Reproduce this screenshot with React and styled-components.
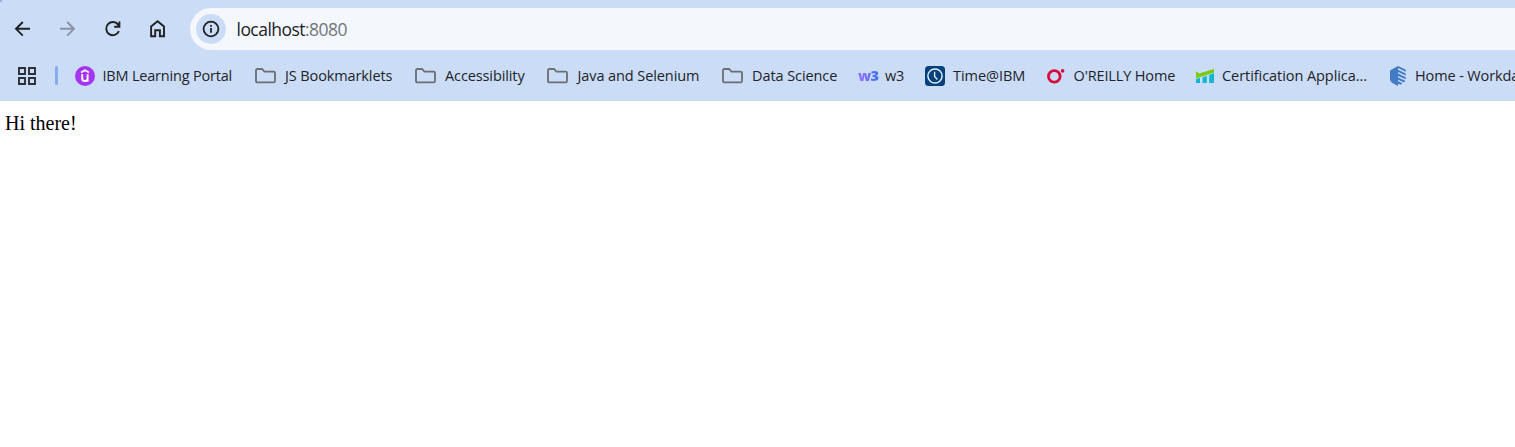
import React from 'react';
import styled, { createGlobalStyle } from 'styled-components';

const GlobalStyle = createGlobalStyle`
  * { box-sizing: border-box; }
  body { margin: 0; background: #fff; overflow: hidden; }
  svg { display: block; flex: none; }
`;

const Browser = styled.div`
  width: 100%;
  height: 447px;
  overflow: hidden;
  font-family: "Open Sans", "Noto Sans", sans-serif;
  color: #202329;
`;

const Chrome = styled.header`
  height: 101px;
  padding-top: 8px;
  background: radial-gradient(circle at 0 0, #7facf0 0, #7facf0 1px, transparent 3px), #cbdcf6;
`;

const Toolbar = styled.div`
  display: flex;
  height: 42px;
`;

const Navigation = styled.nav`
  display: flex;
  align-items: center;
  gap: 21px;
  width: 190px;
  flex: none;
  padding-left: 11px;
`;

const NavButton = styled.button`
  width: 24px;
  height: 24px;
  padding: 0;
  border: 0;
  background: none;
  color: ${({ $dim }) => ($dim ? '#8993a6' : '#202124')};
`;

const AddressBar = styled.div`
  display: flex;
  align-items: center;
  flex: 1;
  padding-left: 6px;
  gap: 10.5px;
  background: #f4f7fc;
  border-radius: 21px 0 0 21px;
`;

const SiteInfo = styled.span`
  display: grid;
  place-items: center;
  width: 30px;
  height: 30px;
  border-radius: 50%;
  background: #cbdcf6;
`;

const Url = styled.span`
  font-size: 17.5px;
  line-height: 24px;
  letter-spacing: -0.54px;
  white-space: pre;
`;

const Port = styled.span`
  color: #70757d;
`;

const BookmarkBar = styled.div`
  display: flex;
  align-items: center;
  height: 51px;
  padding-left: 18px;
  overflow: hidden;
`;

const Separator = styled.span`
  flex: none;
  width: 3px;
  height: 19px;
  margin: 0 17px 0 19px;
  border-radius: 2px;
  background: #86aee9;
`;

const Bookmark = styled.a`
  display: flex;
  align-items: center;
  flex: none;
  width: ${({ $width }) => $width}px;
  height: 28px;
`;

const IconSlot = styled.span`
  flex: none;
  width: ${({ $width }) => $width}px;
`;

const Label = styled.span`
  font-size: 14.5px;
  line-height: 20px;
  letter-spacing: ${({ $tracking }) => $tracking}px;
  white-space: nowrap;
`;

const Page = styled.main`
  padding: 11px 5px;
  font: 20px/23px "Liberation Serif", serif;
  color: #000;
`;

const BrandText = styled.span`
  display: block;
  font: 800 14.5px/18px "Open Sans", sans-serif;
  letter-spacing: -0.8px;
  background: linear-gradient(90deg, #9a72ff, #3b70ed);
  background-clip: text;
  color: transparent;
  width: 21px;
`;

const BackIcon = () => (
  <svg width="24" height="24" fill="none" stroke="currentColor" strokeWidth="1.9">
    <path d="M19 11.8H5M11.8 5L5 11.8l6.8 6.8" />
  </svg>
);
const ForwardIcon = () => (
  <svg width="24" height="24" fill="none" stroke="currentColor" strokeWidth="1.9">
    <path d="M4 11.8h14M11.2 5l6.8 6.8-6.8 6.8" />
  </svg>
);
const ReloadIcon = () => (
  <svg width="24" height="24" fill="none" stroke="currentColor" strokeWidth="1.9">
    <path d="M17.9 14.2a6.6 6.6 0 1 1-.8-6.6L18.4 9M18.4 4.5v5.2h-5.2" />
  </svg>
);
const HomeIcon = () => (
  <svg width="24" height="24" fill="none" stroke="currentColor" strokeWidth="1.9">
    <path d="M5.1 19.2V9.5l6.5-5.2L18 9.5v9.7h-4.1v-6H9.2v6z" />
  </svg>
);
const InfoIcon = () => (
  <svg width="18" height="18" fill="none" stroke="#202124" strokeWidth="1.8">
    <circle cx="9" cy="9" r="7.4" />
    <path d="M9 8v4.8M9 5v1.8" />
  </svg>
);
const AppsIcon = () => (
  <svg width="18" height="18" fill="none" stroke="#2b2f36" strokeWidth="1.9">
    <path d="M1 1h6v6H1zM11 1h6v6h-6zM1 11h6v6H1zM11 11h6v6h-6z" />
  </svg>
);
const FolderIcon = () => (
  <svg width="21" height="16" fill="none" stroke="#6b6e73" strokeWidth="1.8">
    <path d="M1 2.5Q1 1 2.5 1H7l2.5 2.6h9Q20 3.6 20 5.1v7.8q0 1.5-1.5 1.5h-16Q1 14.4 1 12.9z" />
  </svg>
);
const LearningIcon = () => (
  <svg width="20" height="20" fill="none" stroke="#fff">
    <circle cx="10" cy="10" r="10" fill="#a435f0" stroke="none" />
    <path d="M6 6.4L10 4.2l4 2.2" strokeWidth="1.7" />
    <path d="M7.2 8.2v4.2c0 3.5 5.4 3.5 5.4 0V8.2v7.6" strokeWidth="1.9" />
  </svg>
);
const ClockIcon = () => (
  <svg width="20" height="20" fill="none" stroke="#dfebf7">
    <rect width="20" height="20" rx="3.5" fill="#07417b" stroke="none" />
    <circle cx="10" cy="10" r="7.1" strokeWidth="1.5" />
    <path d="M9.6 5.7v4.7l2.8 3" strokeWidth="1.4" />
  </svg>
);
const RingIcon = () => (
  <svg width="19" height="20" fill="none">
    <circle cx="7.3" cy="10.4" r="5.8" stroke="#d40d3c" strokeWidth="2.8" />
    <circle cx="15.6" cy="4.9" r="1.8" fill="#d40d3c" />
  </svg>
);
const ChartIcon = () => (
  <svg width="19" height="20">
    <path d="M0 13.2l4-1.4V17H0zM6.5 11.2l4.3-1.5V17H6.5zM13.2 8.9L18 7v10h-4.8z" fill="#12b5d2" />
    <path d="M0 5.2l3.2 2.2L18 3v3.4L0 12.4z" fill="#7ac912" />
  </svg>
);
const ShieldIcon = () => (
  <svg width="17" height="20" fill="#427cc5">
    <path d="M8 0v20L2 16.7Q0 15.5 0 13.2V4.4zM8 0l7.8 3.8v1.9L8 2zM8 3.7l7.8 3.7v2L8 6.1zM8 7.6l7.8 3.6v2L8 10zM8 11.4l7.3 3.3-1.2 1.8L8 13.8zM8 15.2l4.4 2-1.8 1.5L8 17.8z" />
  </svg>
);

const bookmarks = [
  { label: 'IBM Learning Portal', icon: <LearningIcon />, width: 180, slot: 27.5, tracking: -0.2 },
  { label: 'JS Bookmarklets', icon: <FolderIcon />, width: 160, slot: 30, tracking: -0.11 },
  { label: 'Accessibility', icon: <FolderIcon />, width: 132, slot: 30, tracking: -0.11 },
  { label: 'Java and Selenium', icon: <FolderIcon />, width: 175, slot: 30.5, tracking: -0.09 },
  { label: 'Data Science', icon: <FolderIcon />, width: 136, slot: 30, tracking: -0.08 },
  { label: 'w3', icon: <BrandText>w3</BrandText>, width: 67, slot: 27, tracking: -0.3 },
  { label: 'Time@IBM', icon: <ClockIcon />, width: 122, slot: 28, tracking: -0.06 },
  { label: "O'REILLY Home", icon: <RingIcon />, width: 149, slot: 26.5, tracking: -0.14 },
  { label: 'Certification Applica...', icon: <ChartIcon />, width: 194, slot: 26, tracking: -0.06 },
  { label: 'Home - Workday', icon: <ShieldIcon />, width: 150, slot: 25, tracking: -0.12 },
];

export default function App() {
  return (
    <Browser>
      <GlobalStyle />
      <Chrome>
        <Toolbar>
          <Navigation>
            <NavButton aria-label="Back"><BackIcon /></NavButton>
            <NavButton aria-label="Forward" $dim><ForwardIcon /></NavButton>
            <NavButton aria-label="Reload"><ReloadIcon /></NavButton>
            <NavButton aria-label="Home"><HomeIcon /></NavButton>
          </Navigation>
          <AddressBar>
            <SiteInfo><InfoIcon /></SiteInfo>
            <Url>localhost<Port>:8080</Port></Url>
          </AddressBar>
        </Toolbar>
        <BookmarkBar>
          <AppsIcon />
          <Separator />
          {bookmarks.map(({ label, icon, width, slot, tracking }) => (
            <Bookmark key={label} $width={width}>
              <IconSlot $width={slot}>{icon}</IconSlot>
              <Label $tracking={tracking}>{label}</Label>
            </Bookmark>
          ))}
        </BookmarkBar>
      </Chrome>
      <Page>Hi there!</Page>
    </Browser>
  );
}
